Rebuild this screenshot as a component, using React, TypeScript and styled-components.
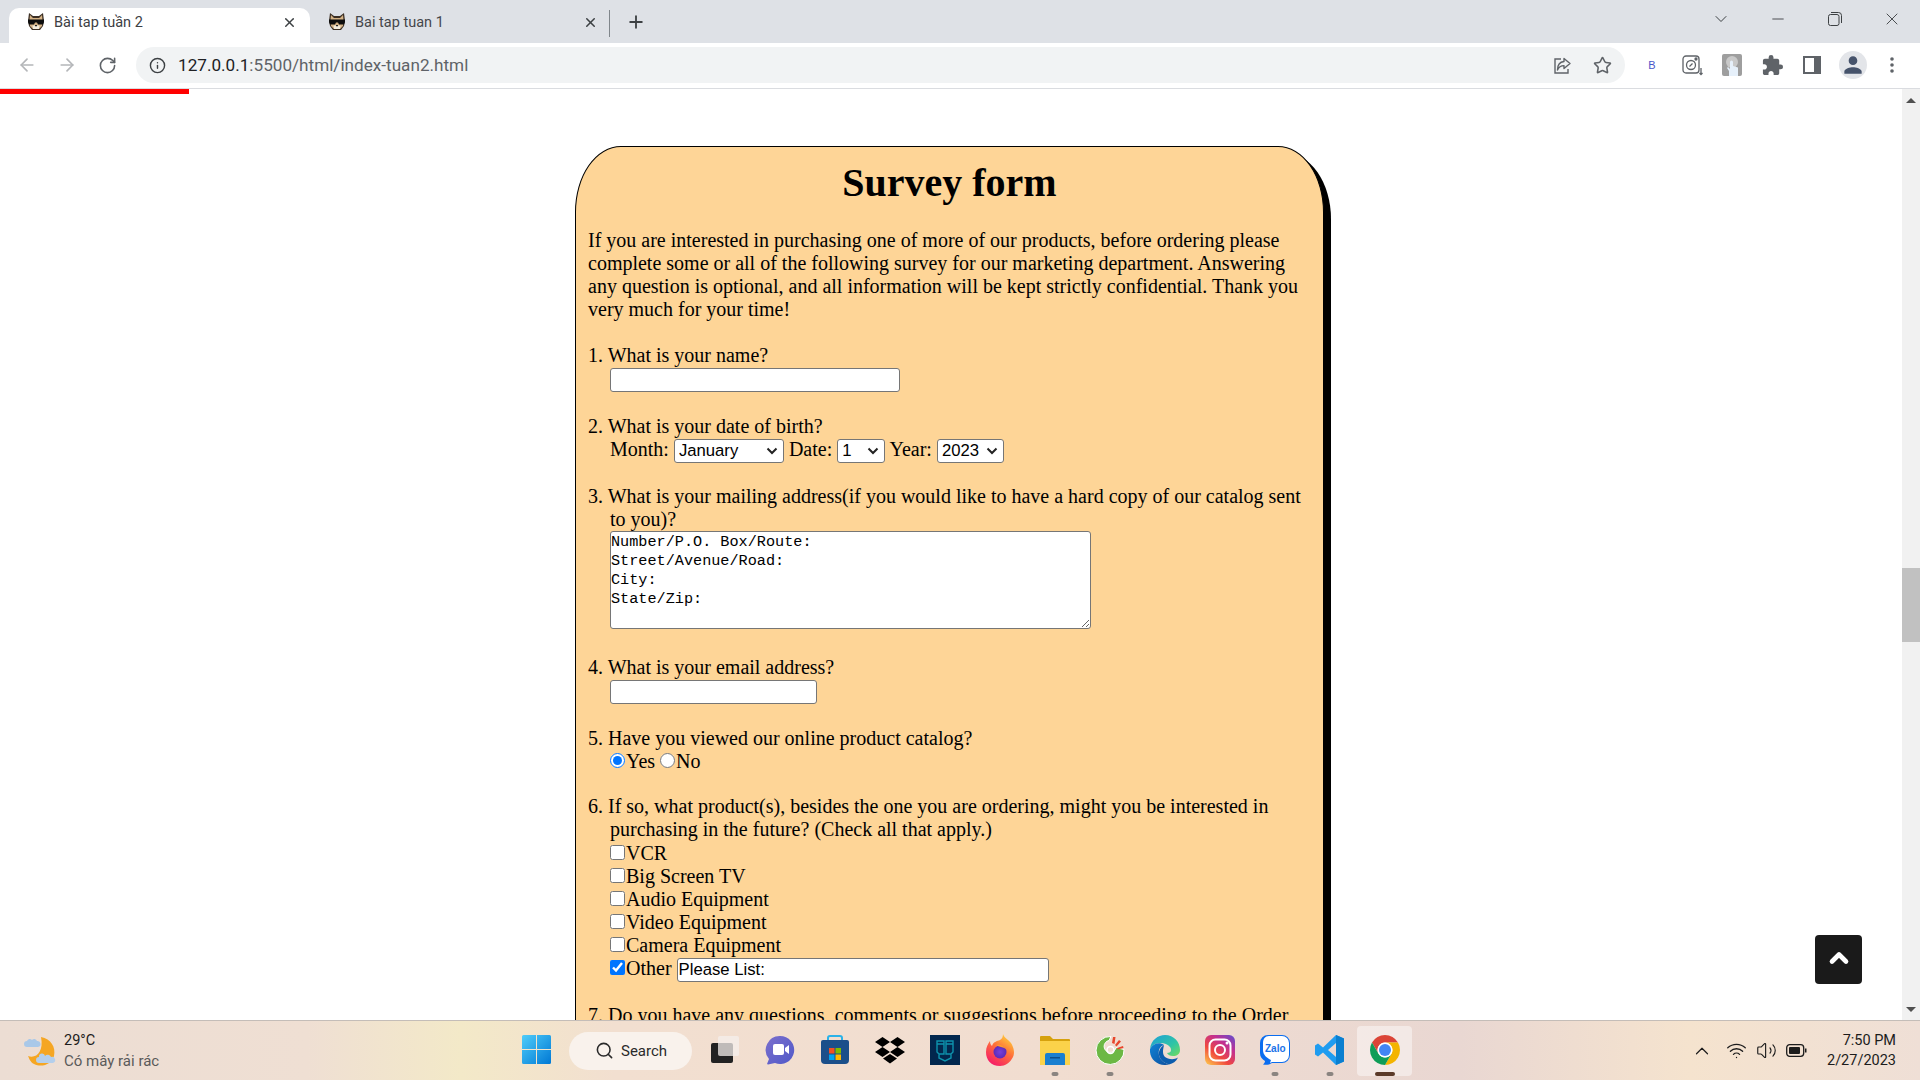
import React from "react";
import styled, { createGlobalStyle } from "styled-components";
import { ArrowLeft, ArrowRight, RotateCw, Info, Star, Search, Plus, X, ChevronDown, ChevronUp, Minus, Wifi, Volume2 } from "lucide-react";
import { MdExtension, MdPerson } from "react-icons/md";

const Global = createGlobalStyle`
  html, body { margin: 0; padding: 0; background: #fff; overflow: hidden; }
`;

const Screen = styled.div`
  width: 1920px; height: 1080px; display: flex; flex-direction: column; overflow: hidden;
  font-family: Roboto, "Liberation Sans", sans-serif;
`;

/* ---------- tab strip ---------- */
const TabStrip = styled.div`
  height: 43px; flex: none; background: #dee1e6; display: flex; align-items: flex-end; padding-left: 9px;
`;
const Tab = styled.div<{ $active?: boolean }>`
  width: 301px; height: 35px; box-sizing: border-box; display: flex; align-items: center;
  padding: 0 13px 7px 18px; gap: 9px; font-size: 14.5px; color: ${p => (p.$active ? "#3c4043" : "#45474a")};
  background: ${p => (p.$active ? "#fff" : "transparent")};
  border-radius: 10px 10px 0 0;
`;
const TabTitle = styled.span` flex: 1; white-space: nowrap; `;
const TabClose = styled.span` display: flex; color: #3c4043; `;
const TabDivider = styled.div` width: 1px; height: 27px; background: #80868b; margin: 0 0 6px -2px; align-self: flex-end; `;
const NewTab = styled.div` width: 52px; height: 35px; padding-bottom: 8px; box-sizing: border-box; display: flex; align-items: center; justify-content: center; color: #3c4043; `;
const WindowControls = styled.div` margin-left: auto; height: 43px; display: flex; align-items: center; color: #3c4043; padding-bottom: 6px; box-sizing: border-box; `;
const WindowButton = styled.div` width: 57px; display: flex; justify-content: center; `;

/* ---------- toolbar ---------- */
const Toolbar = styled.div`
  height: 46px; flex: none; box-sizing: border-box; background: #fff; border-bottom: 1px solid #dadce0;
  display: flex; align-items: center; padding: 0 8px 1px 7px;
`;
const Slot = styled.div<{ $color?: string }>`
  width: 40px; height: 36px; flex: none; display: flex; align-items: center; justify-content: center;
  color: ${p => p.$color || "#5f6368"};
`;
const Omnibox = styled.div`
  flex: 1; height: 36px; margin: 0 7px 0 9px; background: #f1f3f4; border-radius: 18px;
  display: flex; align-items: center; padding: 0 3px 0 13px;
`;
const Url = styled.div` flex: 1; margin-left: 12px; font-size: 17.15px; color: #5f6368; white-space: nowrap; `;
const UrlHost = styled.span` color: #202124; `;
const ExtB = styled.span` font-size: 11px; font-weight: 500; color: #4a55c9; font-family: "Liberation Sans", sans-serif; `;
const AvatarCircle = styled.div`
  width: 28px; height: 28px; margin-left: 1px; border-radius: 50%; background: #e3e5e9; color: #46536b;
  display: flex; align-items: center; justify-content: center;
`;

/* ---------- page ---------- */
const Viewport = styled.div` flex: 1; min-height: 0; display: flex; position: relative; `;
const Progress = styled.div` position: absolute; left: 0; top: 0; width: 189px; height: 5px; background: #f00; `;
const Page = styled.div` flex: 1; overflow: hidden; background: #fff; `;
const Card = styled.main`
  width: 749px; box-sizing: border-box; margin: 57px 0 0 575px; padding: 0 12px;
  background: #fed597; border: 1px solid #000; border-radius: 46px 46px 0 0 / 66px 66px 0 0;
  box-shadow: 7px 7px 0 #000;
  font-family: "Liberation Serif", "Times New Roman", serif; font-size: 20px; line-height: 23px; color: #000;
`;
const Title = styled.h1` margin: 13px 0 0; font-size: 40px; line-height: 46px; font-weight: 700; text-align: center; `;
const Intro = styled.p` margin: 23px 0 0; `;
const Question = styled.div<{ $gap?: number }>`
  margin-top: ${p => p.$gap ?? 22}px; padding-left: 22px; text-indent: -22px;
  & > * { text-indent: 0; }
`;
const Options = styled.div` margin-top: 1px; `;
const TextField = styled.input<{ $w: number }>`
  width: ${p => p.$w}px; height: 24px; box-sizing: border-box; padding: 1px 1px; margin: 0;
  border: 1px solid #767676; border-radius: 3px; background: #fff;
  font-family: "Liberation Sans", Arial, sans-serif; font-size: 16.7px; color: #000; vertical-align: baseline;
`;
const Dropdown = styled.select<{ $w: number }>`
  width: ${p => p.$w}px; height: 24px; box-sizing: border-box; margin: 0; padding: 0 0 0 4px;
  appearance: none; border: 1px solid #767676; border-radius: 3px;
  background: #fff url("data:image/svg+xml,%3Csvg xmlns='http://www.w3.org/2000/svg' width='12' height='8' viewBox='0 0 12 8'%3E%3Cpath d='M1.500 1.500L6 6l4.500-4.500' fill='none' stroke='%23222' stroke-width='2'/%3E%3C/svg%3E") no-repeat right 5px center;
  font-family: "Liberation Sans", Arial, sans-serif; font-size: 16.7px; color: #000;
`;
const Address = styled.textarea`
  display: block; width: 481px; height: 98px; box-sizing: border-box; padding: 1px 0 0; margin: 0;
  border: 1px solid #767676; border-radius: 3px; background: #fff;
  font-family: "Liberation Mono", monospace; font-size: 15.2px; line-height: 19px; color: #000;
`;
const Choice = styled.input`
  width: 15px; height: 15px; margin: 0 1px 0 0;
`;

/* ---------- scrollbar ---------- */
const Scrollbar = styled.div`
  width: 18px; flex: none; background: #f1f1f1; display: flex; flex-direction: column; align-items: center;
`;
const ScrollArrow = styled.div<{ $down?: boolean }>`
  height: 18px; flex: none; margin: 2px 0; display: flex; align-items: center; justify-content: center;
  &::before {
    content: ""; width: 0; height: 0; border-left: 5px solid transparent; border-right: 5px solid transparent;
    ${p => (p.$down ? "border-top: 5px solid #505050;" : "border-bottom: 5px solid #505050;")}
  }
`;
const ScrollGap = styled.div` height: 457px; flex: none; `;
const ScrollThumb = styled.div` width: 18px; height: 74px; flex: none; background: #c1c1c1; `;
const ScrollRest = styled.div` flex: 1; `;
const BackToTop = styled.div`
  position: absolute; left: 1815px; top: 846px; width: 47px; height: 49px; padding-bottom: 4px; box-sizing: border-box; border-radius: 4px;
  background: #1a1a1a; color: #fff; display: flex; align-items: center; justify-content: center;
`;

/* ---------- taskbar ---------- */
const Taskbar = styled.footer`
  height: 60px; flex: none; box-sizing: border-box; border-top: 1px solid #c4bdb8; display: flex; align-items: center;
  background: linear-gradient(90deg, #ecddd3 0%, #efdfd3 16%, #f3e9c8 24%, #f2dfd0 32%, #f1ddd0 55%, #e9d7d2 76%, #f5e3ce 88%, #efdfd6 100%);
`;
const Weather = styled.div` width: 509px; flex: none; box-sizing: border-box; padding-left: 24px; display: flex; align-items: center; gap: 6px; `;
const WeatherText = styled.div` display: flex; flex-direction: column; gap: 2px; `;
const Temp = styled.div` font-size: 14.5px; line-height: 18px; color: #1c1c1c; `;
const Sky = styled.div` font-size: 15px; line-height: 18px; color: #5a5a5a; `;
const AppSlot = styled.div<{ $active?: boolean }>`
  width: 55px; height: 50px; flex: none; position: relative; display: flex; align-items: center; justify-content: center; padding-bottom: 2px; box-sizing: border-box;
  border-radius: 4px; background: ${p => (p.$active ? "rgba(255,255,255,.45)" : "transparent")};
`;
const RunDot = styled.span<{ $active?: boolean }>`
  position: absolute; bottom: 0; left: 50%; transform: translateX(-50%);
  width: ${p => (p.$active ? 20 : 7)}px; height: 4px; border-radius: 2px;
  background: ${p => (p.$active ? "#5b3a29" : "#8a8480")};
`;
const SearchPill = styled.div`
  width: 123px; height: 38px; flex: none; margin: 0 5px 0 5px; padding-left: 26px; box-sizing: border-box; border-radius: 19px; background: #f9f2ec;
  display: flex; align-items: center; gap: 7px; font-size: 15px; color: #2a2a2a;
`;
const Tray = styled.div` margin-left: auto; display: flex; align-items: center; padding-right: 24px; color: #1c1c1c; `;
const TrayIcon = styled.div<{ $gap?: number }>` width: 30px; margin-right: ${p => p.$gap ?? 0}px; display: flex; justify-content: center; `;
const Clock = styled.div` margin-left: 15px; text-align: right; font-size: 14.5px; line-height: 20px; color: #1c1c1c; `;

/* ---------- drawings ---------- */
const CatFavicon = () => (
  <svg width="18" height="18" viewBox="0 0 18 18" style={{ flex: "none" }}>
    <path d="M2 0l4 3h6l4-3 1 8-1 5-3 4H5l-3-4-1-5z" fill="#3b2f24" />
    <path d="M3 2l3 3h6l3-3 .6 6-.6 5-3 3H6l-3-3-.6-5z" fill="#d4b285" />
    <path d="M1 6.500h16V9l-1 2.500h-5L10 9.500H8L7 11.500H2L1 9z" fill="#0d0d0d" />
    <path d="M5.500 12.500h7L12 16H6z" fill="#f5eddd" />
    <path d="M8 12h2v1.200H8z" fill="#222" />
  </svg>
);
const ShareIcon = () => (
  <svg width="19" height="19" viewBox="0 0 19 19" fill="none" stroke="#5f6368" strokeWidth="1.4">
    <path d="M8 3H2v14h13v-4" />
    <path d="M11 2.500l6 5-6 5V9.600C8 9.600 5.800 10.800 4.500 14c0-4.500 2-8 6.500-8.500z" strokeLinejoin="round" />
  </svg>
);
const CameraExt = () => (
  <svg width="22" height="22" viewBox="0 0 22 22" fill="none" stroke="#5f6368" strokeWidth="1.3">
    <rect x="2" y="2" width="16" height="17" rx="3" />
    <circle cx="10" cy="11" r="4.500" />
    <path d="M8.500 12.500l3-3" />
    <circle cx="15" cy="5" r="1" fill="#5f6368" />
    <path d="M20 14v6M18.500 19l1.500 1.500 1.500-1.500" />
  </svg>
);
const TouchExt = () => (
  <svg width="20" height="22" viewBox="0 0 20 22">
    <rect width="20" height="22" rx="2" fill="#9e9e9e" />
    <circle cx="10" cy="8" r="6" fill="#c9c9c9" />
    <path d="M7 22v-5l-2-3 1-1 2 2V8a1.500 1.500 0 0 1 3 0v4l5 1.500V22z" fill="#e6f0fa" />
  </svg>
);
const PanelIcon = () => (
  <svg width="18" height="18" viewBox="0 0 18 18">
    <path d="M0 0h18v18H0z" fill="#5f6368" />
    <path d="M2 2h9v14H2z" fill="#fff" />
  </svg>
);
const RestoreIcon = () => (
  <svg width="14" height="14" viewBox="0 0 14 14" fill="none" stroke="#3c4043" strokeWidth="1">
    <rect x="0.500" y="2.500" width="10.500" height="11" rx="2" />
    <path d="M3 .5h7.500a3 3 0 0 1 3 3V11" />
  </svg>
);

const WeatherIcon = () => (
  <svg width="34" height="34" viewBox="0 0 34 34">
    <path d="M17 3c10 2 15 10 13 19-2 8-12 12-20 8C6 28 5 24 4 22c8 3 16-4 13-19z" fill="#f5a623" />
    <path d="M8 6a3 3 0 0 1 5 1 3 3 0 0 1 1 6H3a3 3 0 0 1 0-6 3 3 0 0 1 5-1z" fill="#a9c8e8" />
    <path d="M21 22a3.500 3.500 0 0 1 6 1 3 3 0 0 1 2 6H15a3 3 0 0 1 0-6 3 3 0 0 1 6-1z" fill="#b4cfec" />
  </svg>
);
const WinLogo = () => (
  <svg width="29" height="29" viewBox="0 0 29 29">
    <defs>
      <linearGradient id="w" x1="0" y1="0" x2="1" y2="1"><stop offset="0" stopColor="#4fcdfa" /><stop offset="1" stopColor="#0078d4" /></linearGradient>
    </defs>
    <path d="M0 1.500A1.500 1.500 0 0 1 1.500 0H14v14H0zM15 0h12.500A1.500 1.500 0 0 1 29 1.500V14H15zM0 15h14v14H1.500A1.500 1.500 0 0 1 0 27.500zM15 15h14v12.500a1.500 1.500 0 0 1-1.500 1.500H15z" fill="url(#w)" />
  </svg>
);
const TaskView = () => (
  <svg width="30" height="30" viewBox="0 0 30 30">
    <rect x="1" y="8" width="22" height="20" rx="2" fill="#222" />
    <rect x="8" y="1" width="21" height="20" rx="2" fill="#f4efec" fillOpacity=".75" />
  </svg>
);
const Teams = () => (
  <svg width="30" height="30" viewBox="0 0 30 30">
    <defs><linearGradient id="t" x1="0" y1="0" x2="1" y2="1"><stop offset="0" stopColor="#7b6fcc" /><stop offset="1" stopColor="#5059c9" /></linearGradient></defs>
    <path d="M15 1a14 14 0 1 1-5 27l-7 1.500c-1 0-1-1-.6-1.500L4 24A14 14 0 0 1 15 1z" fill="url(#t)" />
    <rect x="8" y="9" width="11" height="11" rx="2" fill="#fff" />
    <path d="M20 13l4-3v9l-4-3z" fill="#fff" />
  </svg>
);
const StoreIcon = () => (
  <svg width="30" height="30" viewBox="0 0 30 30">
    <path d="M8 6V3a2 2 0 0 1 2-2h10a2 2 0 0 1 2 2v3" fill="none" stroke="#2bb2e8" strokeWidth="2" />
    <path d="M3 5h24a2 2 0 0 1 2 2v18a4 4 0 0 1-4 4H5a4 4 0 0 1-4-4V7a2 2 0 0 1 2-2z" fill="#1b4f8a" />
    <path d="M9 13h5.500v5.500H9z" fill="#f25022" /><path d="M15.500 13H21v5.500h-5.500z" fill="#7fba00" />
    <path d="M9 19.500h5.500V25H9z" fill="#00a4ef" /><path d="M15.500 19.500H21V25h-5.500z" fill="#ffb900" />
  </svg>
);
const Dropbox = () => (
  <svg width="30" height="28" viewBox="0 0 30 28" fill="#000">
    <path d="M7.500 1L15 6 7.500 11 0 6zM22.500 1L30 6l-7.500 5L15 6zM7.500 11L15 16l-7.500 5L0 16zM22.500 11L30 16l-7.500 5L15 16zM15 18l7 4.500-7 5-7-5z" />
  </svg>
);
const Sentinel = () => (
  <svg width="30" height="30" viewBox="0 0 30 30">
    <rect width="30" height="30" fill="#02274d" />
    <path d="M7 6h7v13H9l-2-2zM23 6h-7v13h5l2-2zM7 9h7M16 9h7M9 19v4l6 3 6-3v-4" fill="none" stroke="#0e93ad" strokeWidth="1.400" />
  </svg>
);
const Firefox = () => (
  <svg width="30" height="32" viewBox="0 0 30 32">
    <defs>
      <linearGradient id="ff" x1="0.800" y1="0" x2="0.200" y2="1"><stop offset="0" stopColor="#ffd93b" /><stop offset=".45" stopColor="#ff7139" /><stop offset="1" stopColor="#f5156c" /></linearGradient>
      <radialGradient id="fc"><stop offset="0" stopColor="#7a3fd8" /><stop offset="1" stopColor="#5b2bb8" /></radialGradient>
    </defs>
    <path d="M18 0c1 4 5 5 8 9 3 5 4 10 2 14-3 6-8 9-13 9C6 32 1 26 1 18 1 13 3 10 5 7c0 3 1 4 2 5 1-4 5-5 8-6 2-1 3-3 3-6z" fill="url(#ff)" />
    <circle cx="15" cy="18" r="6.500" fill="url(#fc)" />
    <path d="M11 11c4-1 8 0 10 4-3-2-7-2-10-4z" fill="#ff9a2e" />
  </svg>
);
const Explorer = () => (
  <svg width="30" height="30" viewBox="0 0 30 30">
    <path d="M0 2a1 1 0 0 1 1-1h9l3 3h16a1 1 0 0 1 1 1v5H0z" fill="#d6a10d" />
    <path d="M0 6h30v24H0z" fill="#fbd24a" />
    <path d="M5 20a2 2 0 0 1 2-2h16a2 2 0 0 1 2 2v10H5z" fill="#1a7fd0" />
    <path d="M10 22h10v1.500H10z" fill="#0c4f8c" />
  </svg>
);
const CocCoc = () => (
  <svg width="30" height="30" viewBox="0 0 30 30">
    <path d="M16 1.500a14 14 0 1 0 13 13l-8-2a6 6 0 1 1-7-7z" fill="#6cb844" stroke="#fff" strokeWidth="1" />
    <path d="M17 8l1-6h2.500l-1 7zM20 10l4-5 2 1.500-4.500 5zM22 13l6-2 .5 2-6 1.500z" fill="#e8462c" />
    <circle cx="15.500" cy="15" r="3.500" fill="none" stroke="#fff" strokeWidth="1.500" />
  </svg>
);
const Edge = () => (
  <svg width="30" height="30" viewBox="0 0 30 30">
    <defs>
      <linearGradient id="e1" x1="0" y1="0" x2="1" y2="1"><stop offset="0" stopColor="#1e9ed9" /><stop offset=".6" stopColor="#2fc5a5" /><stop offset="1" stopColor="#74dc5c" /></linearGradient>
      <linearGradient id="e2" x1="0" y1="0" x2="1" y2="1"><stop offset="0" stopColor="#1083d6" /><stop offset="1" stopColor="#0d4f9e" /></linearGradient>
    </defs>
    <path d="M0 14C1 5 8 0 15 0c9 0 15 7 15 15 0 4-3 6-7 6-3 0-5-1-6-3 4 0 5-3 3-6C17 8 10 7 5 9c-2 1-4 3-5 5z" fill="url(#e1)" />
    <path d="M0 14c3-6 10-7 14-4-4 1-6 5-5 10 1 5 5 8 10 9.500C9 32-1 25 0 14z" fill="url(#e2)" />
    <path d="M9 20c1 5 5 8 10 9.500 4-1 7-3 9-7-3 2-7 2-10 1-3-1-5-3-5-7 0-2 .5-4 1-6.500-3 2-5.500 5-5 10z" fill="#0b5cad" />
  </svg>
);
const Insta = () => (
  <svg width="30" height="30" viewBox="0 0 30 30">
    <defs>
      <linearGradient id="ig" x1="0.100" y1="1" x2="0.900" y2="0"><stop offset="0" stopColor="#fdc04b" /><stop offset=".35" stopColor="#f0483e" /><stop offset=".7" stopColor="#c22f92" /><stop offset="1" stopColor="#6a4bc8" /></linearGradient>
    </defs>
    <rect width="30" height="30" rx="6" fill="url(#ig)" />
    <rect x="4.500" y="4.500" width="21" height="21" rx="6" fill="none" stroke="#fff" strokeWidth="2" />
    <circle cx="15" cy="15" r="5" fill="none" stroke="#fff" strokeWidth="2" />
    <circle cx="22" cy="8" r="1.500" fill="#fff" />
  </svg>
);
const ZaloText = styled.text` font-family: "Liberation Sans", sans-serif; font-size: 10px; font-weight: 700; fill: #1a73e8; `;
const Zalo = () => (
  <svg width="30" height="30" viewBox="0 0 30 30">
    <path d="M8 0h14a8 8 0 0 1 8 8v12a8 8 0 0 1-8 8H12c-3 2-6 2-9 1.500 1-1 2-2 2-3.500-3-2-5-4-5-8V8a8 8 0 0 1 8-8z" fill="#0a6df0" />
    <path d="M9 1h13a7 7 0 0 1 7 7v12a7 7 0 0 1-7 7H12l-2 1 1-3c-4-2-8-5-8-10V8c0-4 2-7 6-7z" fill="#fff" />
    <ZaloText x="5" y="17">Zalo</ZaloText>
  </svg>
);
const VSCode = () => (
  <svg width="30" height="30" viewBox="0 0 30 30">
    <path d="M21 0l8 3.500v23L21 30 8 17.500l-5 4L0 19.500V10.500l3-2 5 4zM21 8l-8 7 8 7z" fill="#1f9cf0" />
    <path d="M21 0l8 3.500v23L21 30V22V8z" fill="#0a7fd0" />
  </svg>
);
const ChromeIcon = () => (
  <svg width="30" height="30" viewBox="4 4 40 40">
    <path d="M6.680 14A20 20 0 0 1 41.320 14H24A10 10 0 0 0 15.340 29Z" fill="#db4437" />
    <path d="M41.320 14A20 20 0 0 1 24 44L32.660 29A10 10 0 0 0 24 14Z" fill="#f4b400" />
    <path d="M24 44A20 20 0 0 1 6.680 14L15.340 29A10 10 0 0 0 32.660 29Z" fill="#0f9d58" />
    <circle cx="24" cy="24" r="10" fill="#fff" />
    <circle cx="24" cy="24" r="8" fill="#4285f4" />
  </svg>
);

const apps: { icon: React.ReactNode; running?: boolean }[] = [
  { icon: <TaskView /> }, { icon: <Teams /> }, { icon: <StoreIcon /> }, { icon: <Dropbox /> }, { icon: <Sentinel /> },
  { icon: <Firefox /> }, { icon: <Explorer />, running: true }, { icon: <CocCoc />, running: true }, { icon: <Edge /> },
  { icon: <Insta /> }, { icon: <Zalo />, running: true }, { icon: <VSCode />, running: true },
];

const noop = () => {};

export default function App() {
  return (
    <Screen>
      <Global />
      <TabStrip>
        <Tab $active>
          <CatFavicon />
          <TabTitle>Bài tap tuần 2</TabTitle>
          <TabClose><X size={15} strokeWidth={2.4} /></TabClose>
        </Tab>
        <Tab>
          <CatFavicon />
          <TabTitle>Bai tap tuan 1</TabTitle>
          <TabClose><X size={15} strokeWidth={2.4} /></TabClose>
        </Tab>
        <TabDivider />
        <NewTab><Plus size={20} strokeWidth={2.2} /></NewTab>
        <WindowControls>
          <WindowButton><ChevronDown size={20} strokeWidth={1.2} /></WindowButton>
          <WindowButton><Minus size={18} strokeWidth={1.2} /></WindowButton>
          <WindowButton><RestoreIcon /></WindowButton>
          <WindowButton><X size={20} strokeWidth={1.1} /></WindowButton>
        </WindowControls>
      </TabStrip>

      <Toolbar>
        <Slot $color="#b4b6b9"><ArrowLeft size={20} strokeWidth={2} /></Slot>
        <Slot $color="#b4b6b9"><ArrowRight size={20} strokeWidth={2} /></Slot>
        <Slot><RotateCw size={19} strokeWidth={2} /></Slot>
        <Omnibox>
          <Info size={17} color="#3c4043" strokeWidth={2} />
          <Url><UrlHost>127.0.0.1</UrlHost>:5500/html/index-tuan2.html</Url>
          <Slot><ShareIcon /></Slot>
          <Slot><Star size={19} strokeWidth={2} /></Slot>
        </Omnibox>
        <Slot><ExtB>B</ExtB></Slot>
        <Slot><CameraExt /></Slot>
        <Slot><TouchExt /></Slot>
        <Slot><MdExtension size={23} /></Slot>
        <Slot><PanelIcon /></Slot>
        <Slot><AvatarCircle><MdPerson size={26} /></AvatarCircle></Slot>
        <Slot>
          <svg width="4" height="16" viewBox="0 0 4 16" fill="#5f6368"><circle cx="2" cy="2" r="1.800" /><circle cx="2" cy="8" r="1.800" /><circle cx="2" cy="14" r="1.800" /></svg>
        </Slot>
      </Toolbar>

      <Viewport>
        <Page>
          <Card>
            <Title>Survey form</Title>
            <Intro>
              If you are interested in purchasing one of more of our products, before ordering please complete some or all of the following survey for our marketing department. Answering any question is optional, and all information will be kept strictly confidential. Thank you very much for your time!
            </Intro>
            <Question $gap={23}>
              1. What is your name?<br />
              <TextField $w={290} />
            </Question>
            <Question $gap={23}>
              2. What is your date of birth?<br />
              <span>Month: </span>
              <Dropdown $w={110} defaultValue="January"><option>January</option></Dropdown>
              <span> Date: </span>
              <Dropdown $w={48} defaultValue="1"><option>1</option></Dropdown>
              <span> Year: </span>
              <Dropdown $w={67} defaultValue="2023"><option>2023</option></Dropdown>
            </Question>
            <Question>
              3. What is your mailing address(if you would like to have a hard copy of our catalog sent to you)?
              <Address defaultValue={"Number/P.O. Box/Route:\nStreet/Avenue/Road:\nCity:\nState/Zip:"} />
            </Question>
            <Question $gap={27}>
              4. What is your email address?<br />
              <TextField $w={207} />
            </Question>
            <Question $gap={23}>
              5. Have you viewed our online product catalog?<br />
              <Choice type="radio" name="seen" checked onChange={noop} /><span>Yes </span>
              <Choice type="radio" name="seen" /><span>No</span>
            </Question>
            <Question>
              6. If so, what product(s), besides the one you are ordering, might you be interested in purchasing in the future? (Check all that apply.)
              <Options>
                <Choice type="checkbox" /><span>VCR</span><br />
                <Choice type="checkbox" /><span>Big Screen TV</span><br />
                <Choice type="checkbox" /><span>Audio Equipment</span><br />
                <Choice type="checkbox" /><span>Video Equipment</span><br />
                <Choice type="checkbox" /><span>Camera Equipment</span><br />
                <Choice type="checkbox" checked onChange={noop} /><span>Other </span>
                <TextField $w={372} defaultValue="Please List:" />
              </Options>
            </Question>
            <Question>
              7. Do you have any questions, comments or suggestions before proceeding to the Order
            </Question>
          </Card>
        </Page>
        <Scrollbar>
          <ScrollArrow />
          <ScrollGap />
          <ScrollThumb />
          <ScrollRest />
          <ScrollArrow $down />
        </Scrollbar>
        <Progress />
        <BackToTop><ChevronUp size={28} strokeWidth={4} /></BackToTop>
      </Viewport>

      <Taskbar>
        <Weather>
          <WeatherIcon />
          <WeatherText>
            <Temp>29°C</Temp>
            <Sky>Có mây rải rác</Sky>
          </WeatherText>
        </Weather>
        <AppSlot><WinLogo /></AppSlot>
        <SearchPill><Search size={19} strokeWidth={2} />Search</SearchPill>
        {apps.map((a, i) => (
          <AppSlot key={i}>{a.icon}{a.running && <RunDot />}</AppSlot>
        ))}
        <AppSlot $active><ChromeIcon /><RunDot $active /></AppSlot>
        <Tray>
          <TrayIcon $gap={5}><ChevronUp size={22} strokeWidth={1.3} /></TrayIcon>
          <TrayIcon><Wifi size={21} strokeWidth={1.5} /></TrayIcon>
          <TrayIcon><Volume2 size={21} strokeWidth={1.3} /></TrayIcon>
          <TrayIcon>
            <svg width="21" height="13" viewBox="0 0 21 13" fill="none"><rect x="0.700" y="0.700" width="17" height="11.600" rx="3" stroke="#1c1c1c" strokeWidth="1.300" /><rect x="3" y="3" width="11" height="7" rx="1" fill="#1c1c1c" /><path d="M19 4.500h1.500v4H19z" fill="#1c1c1c" /></svg>
          </TrayIcon>
          <Clock>7:50 PM<br />2/27/2023</Clock>
        </Tray>
      </Taskbar>
    </Screen>
  );
}
